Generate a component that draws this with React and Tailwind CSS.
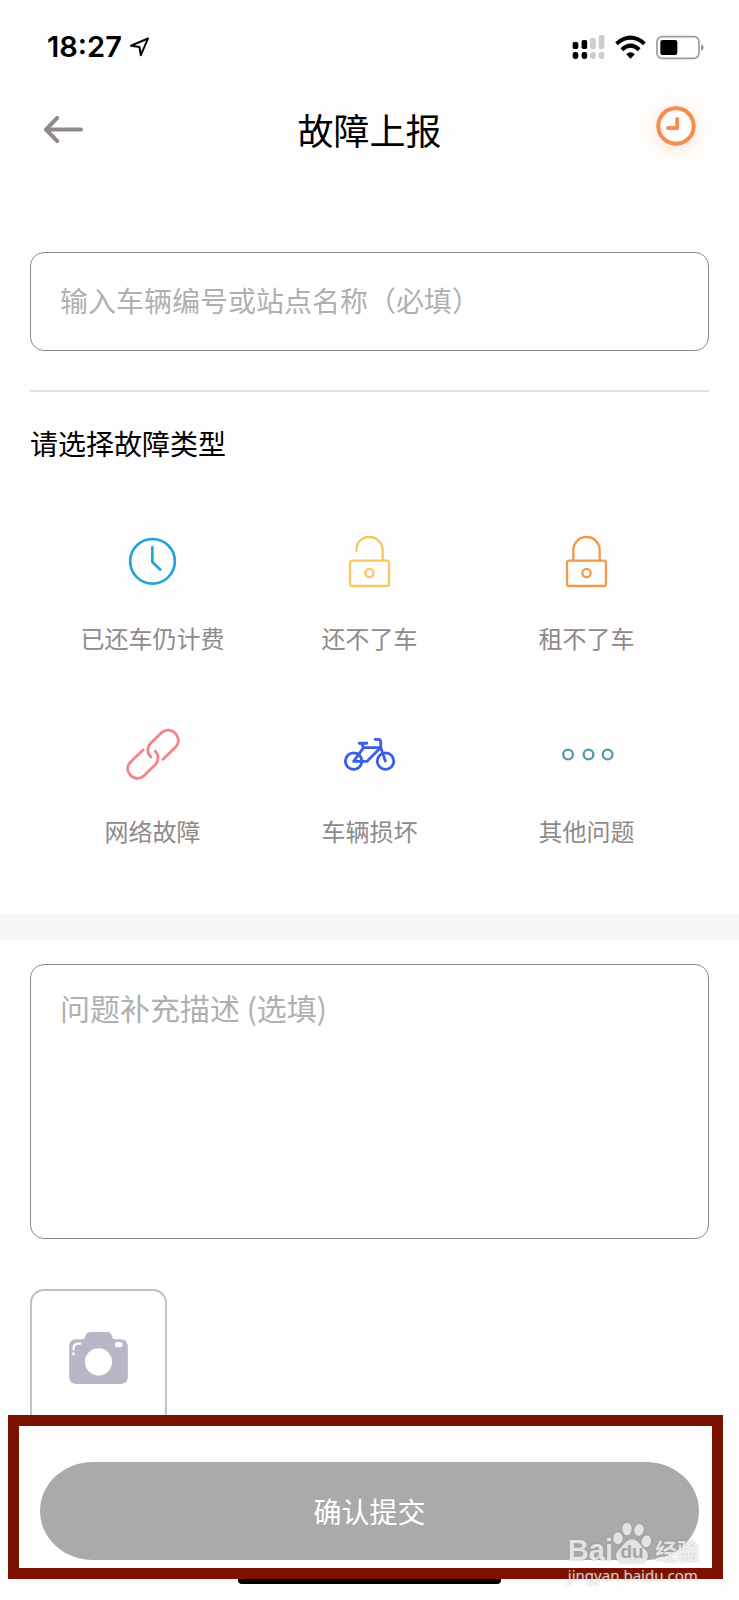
import React from "react";

function LocationIcon() {
  return (
    <svg viewBox="388 106 64 66" className="h-[22px] w-[21px]" fill="none" stroke="#000" strokeWidth="6" strokeLinejoin="round" aria-hidden="true">
      <path d="M446 113 L394 135 L420 139 L424 164 Z" />
    </svg>
  );
}

function SignalIcon() {
  return (
    <svg viewBox="610 102 100 78" className="h-[26px] w-[33px]" aria-hidden="true">
      <g fill="#000">
        <rect x="612" y="126" width="17" height="21" rx="5" />
        <rect x="639" y="120" width="17" height="27" rx="5" />
        <rect x="612" y="156" width="17" height="21" rx="7" />
        <rect x="639" y="156" width="17" height="21" rx="7" />
      </g>
      <g fill="#cccccc">
        <rect x="665" y="114" width="17" height="33" rx="5" />
        <rect x="691" y="105" width="17" height="42" rx="5" />
        <rect x="665" y="156" width="17" height="21" rx="7" />
        <rect x="691" y="156" width="17" height="21" rx="7" />
      </g>
    </svg>
  );
}

function WifiIcon() {
  return (
    <svg viewBox="740 102 92 72" className="h-6 w-[31px]" fill="none" stroke="#000" strokeWidth="12" aria-hidden="true">
      <path d="M744 128 Q786 92 828 128" />
      <path d="M760 146 Q786 122 812 146" />
      <path d="M773 160 Q786 147 799 160 L786 173 Z" fill="#000" stroke="none" />
    </svg>
  );
}

function BatteryIcon() {
  return (
    <svg viewBox="863 102 147 75" className="h-[25px] w-[49px]" aria-hidden="true">
      <rect x="866" y="107" width="126" height="65" rx="15" fill="none" stroke="#9b9b9b" strokeWidth="5" />
      <rect x="876" y="117" width="51" height="45" rx="7" fill="#000" />
      <path d="M998 130 Q1006 133 1006 140 Q1006 147 998 150 Z" fill="#9b9b9b" />
    </svg>
  );
}

function BackIcon() {
  return (
    <svg viewBox="129 346 122 88" className="h-[29px] w-[41px]" fill="none" stroke="#8f888a" strokeWidth="12" strokeLinecap="round" strokeLinejoin="round" aria-hidden="true">
      <path d="M243 390 H137" />
      <path d="M171 355 L137 390 L171 425" />
    </svg>
  );
}

function HistoryIcon() {
  return (
    <svg viewBox="0 0 40 40" className="size-10 rounded-full shadow-[0_4px_20px_rgba(247,160,80,0.26)]" fill="none" stroke="#f68e50" strokeLinecap="round" strokeLinejoin="round" aria-hidden="true">
      <circle cx="20" cy="20" r="17.8" strokeWidth="4.2" />
      <path d="M21.2 13 V22 H12" strokeWidth="4" />
    </svg>
  );
}

function ClockIcon() {
  return (
    <svg viewBox="204 82 147 147" className="size-[49px]" fill="none" stroke="#23a3d8" strokeWidth="8" strokeLinecap="round" strokeLinejoin="round" aria-hidden="true">
      <circle cx="277.5" cy="155" r="67" />
      <path d="M277 113 V157 L301 180" />
    </svg>
  );
}

function LockIcon({ open, color }) {
  return (
    <svg viewBox="586 75 129 159" className="h-[53px] w-[43px]" fill="none" stroke={color} strokeWidth="7" strokeLinecap="round" strokeLinejoin="round" aria-hidden="true">
      <rect x="592" y="152" width="117" height="76" rx="7" />
      <circle cx="650.5" cy="189" r="12.5" />
      {open ? (
        <path d="M611 122 C611 96 628 81 650 81 C674 81 690 99 690 122 V151" />
      ) : (
        <path d="M611 151 V122 C611 98 628 81 650.5 81 C673 81 690 98 690 122 V151" />
      )}
    </svg>
  );
}

function LinkIcon() {
  return (
    <svg viewBox="190 52 168 162" className="h-[54px] w-14" fill="none" stroke="#f38488" strokeWidth="8.5" strokeLinecap="round" strokeLinejoin="round" aria-hidden="true">
      <path d="M304 149 L343 111 C353 100 353 84 342 72 C330 59 313 58 301 68 L267 101 C255 113 256 132 268 142" />
      <path d="M244 121 L206 158 C195 169 195 184 206 196 C218 209 235 209 246 199 L280 166 C292 154 292 136 281 125" />
    </svg>
  );
}

function BikeIcon() {
  return (
    <svg viewBox="848 81 160 109" className="h-9 w-[53px]" fill="none" stroke="#3a5eea" strokeWidth="8.5" strokeLinecap="round" strokeLinejoin="round" aria-hidden="true">
      <circle cx="880" cy="157" r="25" />
      <circle cx="976.5" cy="157" r="25" />
      <path d="M945 91 H954 Q962 91 962 99 V116 L976 157" />
      <path d="M910 116 H962 L920 158 H880 Z" />
      <path d="M897 103 H920 M905 104 L910 116" />
    </svg>
  );
}

function MoreIcon() {
  return (
    <svg viewBox="567 112 164 44" className="h-[15px] w-[55px]" fill="none" stroke="#5b98aa" strokeWidth="7" aria-hidden="true">
      <circle cx="594" cy="134" r="14.5" />
      <circle cx="655" cy="134" r="14.5" />
      <circle cx="712" cy="134" r="14.5" />
    </svg>
  );
}

function CameraIcon() {
  return (
    <svg viewBox="204 182 183 163" className="h-[54px] w-[61px]" aria-hidden="true">
      <path
        fill="#b9b7c7"
        d="M229 207 H246 Q254 207 255 200 Q258 185 274 185 H320 Q334 185 337 200 Q338 207 346 207 H362 Q384 207 384 229 V320 Q384 342 362 342 H229 Q207 342 207 320 V229 Q207 207 229 207 Z"
      />
      <circle cx="295.5" cy="275" r="41" fill="#fff" />
      <rect x="345" y="215" width="23" height="16" rx="8" fill="#fff" />
      <path d="M241 220 H235 Q220 220 220 235 V238" fill="none" stroke="#fff" strokeWidth="7" strokeLinecap="round" />
      <ellipse cx="220" cy="251" rx="4" ry="5" fill="#fff" />
    </svg>
  );
}

const faultTypes = [
  { label: "已还车仍计费", icon: <ClockIcon /> },
  { label: "还不了车", icon: <LockIcon open color="#f4c865" /> },
  { label: "租不了车", icon: <LockIcon color="#f09a4a" /> },
  { label: "网络故障", icon: <LinkIcon /> },
  { label: "车辆损坏", icon: <BikeIcon /> },
  { label: "其他问题", icon: <MoreIcon /> },
];

function Watermark() {
  return (
    <div className="pointer-events-none absolute right-10 bottom-3.5 flex flex-col text-white/75 [text-shadow:0_0_2px_rgba(120,120,120,0.6)]">
      <div className="flex h-[42px] items-end">
        <span className="font-['Liberation_Sans',sans-serif] text-[29px] leading-[28px] font-bold">Bai</span>
        <span className="relative flex h-[42px] w-[38px] justify-center">
          <svg viewBox="730 422 114 124" className="h-[42px] w-[38px] drop-shadow-[0_0_1px_rgba(120,120,120,0.5)]" fill="#ececec" fillOpacity="0.9" aria-hidden="true">
            <ellipse cx="745" cy="470" rx="14" ry="18" />
            <ellipse cx="772" cy="442" rx="14" ry="19" />
            <ellipse cx="808" cy="445" rx="14" ry="18" transform="rotate(12 808 445)" />
            <ellipse cx="830" cy="479" rx="14" ry="18" transform="rotate(12 830 479)" />
            <path d="M787 473 C803 473 810 489 822 500 C835 511 838 521 832 533 C824 548 804 545 787 543 C770 545 750 548 742 533 C736 521 740 511 752 500 C764 489 771 473 787 473 Z" />
          </svg>
          <span className="absolute bottom-0.5 font-['Liberation_Sans',sans-serif] text-[19px] leading-5 font-bold text-[#a3a3a3] [text-shadow:none]">du</span>
        </span>
        <span className="mb-0.5 ml-1 text-[22px] leading-[26px] font-bold">经验</span>
      </div>
      <span className="font-['Noto_Sans',sans-serif] text-[15px] leading-[22px]">jingyan.baidu.com</span>
    </div>
  );
}

export default function App() {
  return (
    <div className="relative min-h-screen bg-[#fefefe] pb-4 font-['Noto_Sans_CJK_SC',sans-serif] text-black">
      <div className="flex h-[94px] items-center justify-between pr-[34px] pl-[47px]">
        <div className="flex items-center gap-[7px]">
          <span className="font-['Inter',sans-serif] text-[29px] leading-9 font-semibold">18:27</span>
          <LocationIcon />
        </div>
        <div className="flex items-center gap-2.5">
          <SignalIcon />
          <WifiIcon />
          <BatteryIcon />
        </div>
      </div>

      <header className="grid h-[70px] grid-cols-3 items-center px-[43px]">
        <button type="button" aria-label="返回" className="justify-self-start">
          <BackIcon />
        </button>
        <h1 className="text-center text-4xl leading-[48px]">故障上报</h1>
        <button type="button" aria-label="上报记录" className="mb-1.5 justify-self-end">
          <HistoryIcon />
        </button>
      </header>

      <main>
        <section className="px-[30px] pt-[88px]">
          <input
            type="text"
            aria-label="车辆编号或站点名称"
            placeholder="输入车辆编号或站点名称（必填）"
            className="block h-[99px] w-full rounded-[14px] border border-[#8a8a8a] bg-white px-[29px] pb-1 text-[28px] placeholder:text-[#b0b0b0]"
          />
          <hr className="mt-[39px] border-t-2 border-[#e1e1e1]" />
          <h2 className="mt-[30px] text-[28px] leading-[42px]">请选择故障类型</h2>
        </section>

        <div className="mt-[65px] grid grid-cols-3 gap-y-[65px] px-11 pb-[63px]">
          {faultTypes.map((type) => (
            <button key={type.label} type="button" className="flex flex-col items-center gap-[27px]">
              <span className="flex h-16 items-center">{type.icon}</span>
              <span className="mb-px text-2xl leading-9 text-[#8f898b]">{type.label}</span>
            </button>
          ))}
        </div>

        <div className="h-[27px] bg-[#f7f7fa]" />

        <section className="px-[30px] pt-6">
          <textarea
            aria-label="问题补充描述"
            placeholder="问题补充描述 (选填)"
            className="block h-[275px] w-full resize-none rounded-[14px] border border-[#8a8a8a] bg-white px-[29px] py-5 text-3xl leading-[44px] placeholder:text-[#b0b0b0]"
          />
          <button
            type="button"
            aria-label="添加照片"
            className="mt-[50px] flex size-[137px] items-center justify-center rounded-[14px] border-2 border-[#c0bfcc] bg-white"
          >
            <CameraIcon />
          </button>
        </section>
      </main>

      <footer className="relative -mt-[11px] mr-4 ml-2 border-[11px] border-[#7d1100] bg-[#fefefe] pt-9 pr-[13px] pb-2 pl-[21px]">
        <button type="submit" className="block h-[98px] w-full rounded-[53px/49px] bg-[#aaaaaa] text-[28px] text-white">
          确认提交
        </button>
      </footer>
      <div className="mx-auto h-[5px] w-[263px] rounded-b bg-black" />

      <Watermark />
    </div>
  );
}
